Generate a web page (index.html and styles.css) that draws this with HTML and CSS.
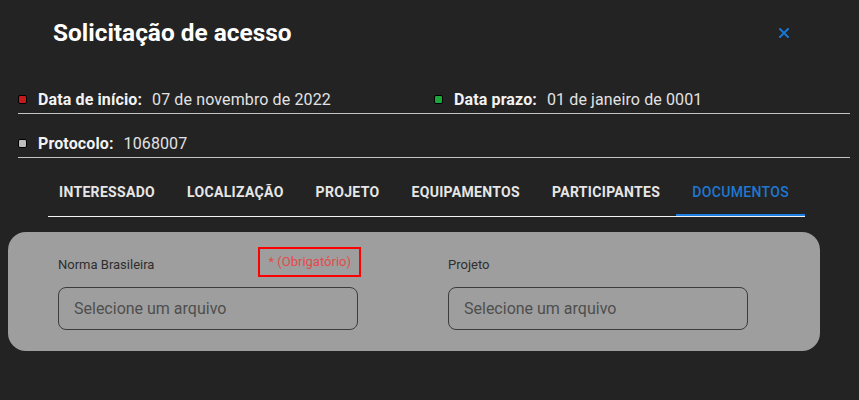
FILE: index.html
```html
<!DOCTYPE html>
<html lang="pt-BR">
<head>
    <meta charset="UTF-8">
    <meta name="viewport" content="width=device-width, initial-scale=1.0">
    <title>Solicitação de acesso</title>
    <link rel="stylesheet" href="styles.css">
</head>
<body>
    <div class="dialog">
        <div class="dialog-header">
            <h1 class="dialog-title">Solicitação de acesso</h1>
            <button class="close-btn" aria-label="Fechar">
                <svg width="10" height="10" viewBox="0 0 10 10">
                    <path d="M1 1 L9 9 M9 1 L1 9" stroke="#1976d2" stroke-width="2" stroke-linecap="square"/>
                </svg>
            </button>
        </div>

        <div class="info-row">
            <div class="info-item">
                <span class="dot dot-red"></span>
                <span class="info-label">Data de início:</span>
                <span class="info-value">07 de novembro de 2022</span>
            </div>
            <div class="info-item">
                <span class="dot dot-green"></span>
                <span class="info-label">Data prazo:</span>
                <span class="info-value">01 de janeiro de 0001</span>
            </div>
        </div>
        <div class="info-row">
            <div class="info-item">
                <span class="dot dot-grey"></span>
                <span class="info-label">Protocolo:</span>
                <span class="info-value">1068007</span>
            </div>
        </div>

        <div class="tabs">
            <div class="tab">Interessado</div>
            <div class="tab">Localização</div>
            <div class="tab">Projeto</div>
            <div class="tab">Equipamentos</div>
            <div class="tab">Participantes</div>
            <div class="tab active">Documentos</div>
        </div>

        <div class="card">
            <div class="field">
                <div class="field-head">
                    <label class="field-label">Norma Brasileira</label>
                    <span class="required">* (Obrigatório)</span>
                </div>
                <input class="file-input" type="text" placeholder="Selecione um arquivo">
            </div>
            <div class="field">
                <div class="field-head">
                    <label class="field-label">Projeto</label>
                </div>
                <input class="file-input" type="text" placeholder="Selecione um arquivo">
            </div>
        </div>
    </div>
</body>
</html>
```

FILE: styles.css
```css
body {
    margin: 0;
    background: #232323;
    font-family: 'Roboto', 'Liberation Sans', sans-serif;
    color: #eee;
}

.dialog {
    width: 859px;
    height: 400px;
}

.dialog-header {
    display: flex;
    justify-content: space-between;
    align-items: flex-start;
    height: 70px;
    box-sizing: border-box;
    padding: 19px 70px 0 53px;
}

.dialog-title {
    margin: 0;
    font-size: 24.4px;
    line-height: 28px;
    font-weight: 700;
    color: #fff;
}

.close-btn {
    background: none;
    border: none;
    padding: 0;
    margin-top: 9px;
    cursor: pointer;
    line-height: 0;
}

.info-row {
    display: grid;
    grid-template-columns: 416px 416px;
    margin: 0 9px 0 18px;
    padding: 20px 0 4px;
    border-bottom: 1px solid #c4c4c4;
}

.info-item {
    display: flex;
    align-items: center;
    font-size: 16px;
    line-height: 19px;
    letter-spacing: 0.12px;
}

.dot {
    width: 7px;
    height: 7px;
    border: 1px solid #000;
    border-radius: 2px;
    margin-right: 11px;
}

.dot-red { background: #c41a1a; }
.dot-green { background: #1aa83a; }
.dot-grey { background: #bdbdbd; }

.info-label {
    font-weight: 700;
    color: #f2f2f2;
    margin-right: 10px;
}

.info-value {
    color: #e2e2e2;
}

.tabs {
    display: flex;
    width: 757px;
    margin: 10px 0 0 48px;
    border-bottom: 1px solid #f2f2f2;
}

.tab {
    height: 48px;
    box-sizing: border-box;
    display: flex;
    align-items: center;
    padding: 0 16px;
    font-size: 14px;
    font-weight: 700;
    letter-spacing: 0.32px;
    text-transform: uppercase;
    color: #e6e6e6;
    white-space: nowrap;
}

.tab:first-child {
    margin-left: -5px;
}

.tab.active {
    margin-left: auto;
    font-weight: 500;
    color: #1f78d1;
    border-bottom: 2px solid #1f7fe0;
    margin-bottom: -1px;
    padding-top: 1px;
}

.card {
    display: grid;
    grid-template-columns: 300px 300px;
    column-gap: 90px;
    width: 812px;
    box-sizing: border-box;
    margin: 15px 0 0 8px;
    padding: 15px 50px 21px;
    background: #9e9e9e;
    border-radius: 18px;
}

.field-head {
    display: flex;
    justify-content: space-between;
    align-items: center;
    height: 30px;
    margin-right: -3px;
}

.field-label {
    font-size: 13px;
    color: #2e2e2e;
    margin-top: 4px;
}

.required {
    font-size: 13px;
    line-height: 16px;
    color: #e34b4b;
    border: 2px solid #ff0000;
    padding: 5px 8px;
}

.file-input {
    display: block;
    width: 300px;
    height: 43px;
    box-sizing: border-box;
    margin-top: 10px;
    padding: 0 15px;
    border: 1px solid #3c3c3c;
    border-radius: 8px;
    background: transparent;
    font-family: 'Roboto', 'Liberation Sans', sans-serif;
    font-size: 16px;
    color: #333;
    outline: none;
}

.file-input::placeholder {
    color: #4e4e4e;
}
```
